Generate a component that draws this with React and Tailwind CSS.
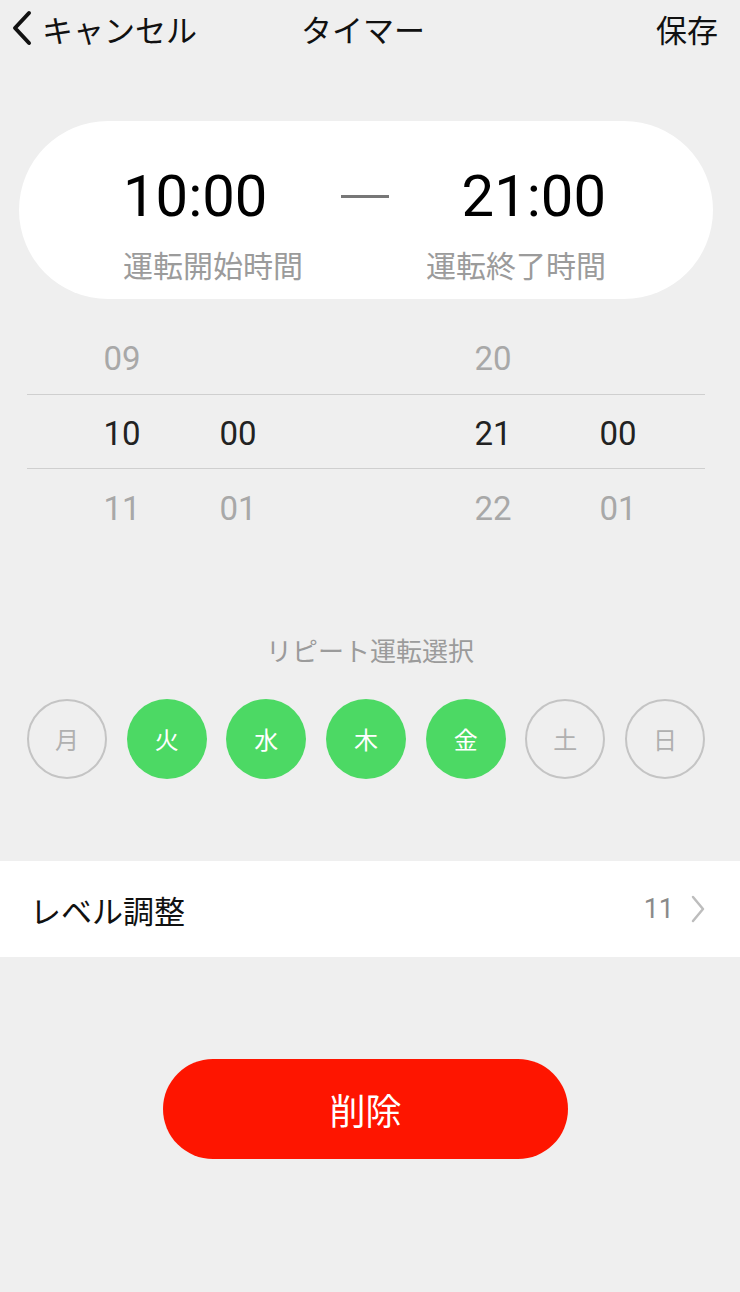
import React from 'react';

const days = [
  { label: '月', on: false },
  { label: '火', on: true },
  { label: '水', on: true },
  { label: '木', on: true },
  { label: '金', on: true },
  { label: '土', on: false },
  { label: '日', on: false },
];

const rows = [
  { cells: ['09', '', '20', ''], active: false },
  { cells: ['10', '00', '21', '00'], active: true },
  { cells: ['11', '01', '22', '01'], active: false },
];

const digits = { fontFamily: 'Roboto, "Noto Sans", sans-serif' };

const PickerRow = ({ cells, active }) => {
  const color = active ? 'text-[#222]' : 'text-[#a8a8a8]';
  return (
    <div
      className={`flex h-[75px] items-center pt-[3px] text-[33px] leading-none ${color} ${
        active ? 'border-y border-[#cfcfcf]' : ''
      }`}
      style={digits}
    >
      <div className="ml-[55px] w-[80px] text-center">{cells[0]}</div>
      <div className="ml-[36px] w-[80px] text-center">{cells[1]}</div>
      <div className="ml-[175px] w-[80px] text-center">{cells[2]}</div>
      <div className="ml-[45px] w-[80px] text-center">{cells[3]}</div>
    </div>
  );
};

export default function App() {
  return (
    <div
      className="min-h-[1292px] w-[740px] bg-[#efefef] pb-10"
      style={{ fontFamily: '"Noto Sans CJK JP", "Noto Sans", sans-serif' }}
    >
      {/* Header */}
      <div className="flex h-[56px] items-center justify-between pl-[10px] pr-[22px] text-[31px] leading-none text-[#111]">
        <div className="flex w-[200px] items-center">
          <svg width="24" height="38" viewBox="0 0 24 38" className="mr-[8px]">
            <polyline
              points="19,4 5,19 19,34"
              fill="none"
              stroke="#111"
              strokeWidth="4"
              strokeLinecap="round"
              strokeLinejoin="round"
            />
          </svg>
          <span>キャンセル</span>
        </div>
        <div className="ml-[-2px]">タイマー</div>
        <div className="w-[200px] text-right">保存</div>
      </div>

      {/* Time card */}
      <div className="ml-[19px] mr-[27px] mt-[65px] flex h-[178px] justify-between rounded-full bg-white pl-[104px] pr-[107px] pt-[43px]">
        <div className="flex flex-col items-start">
          <div className="h-[64px] text-[58px] leading-[64px] text-black" style={digits}>10:00</div>
          <div className="mt-[16px] h-[40px] text-[30px] leading-[40px] text-[#9b9b9b]">運転開始時間</div>
        </div>
        <div className="mt-[31px] h-[3px] w-[48px] bg-[#777]" />
        <div className="flex flex-col items-end">
          <div className="h-[64px] text-[58px] leading-[64px] text-black" style={digits}>21:00</div>
          <div className="mt-[16px] h-[40px] text-[30px] leading-[40px] text-[#9b9b9b]">運転終了時間</div>
        </div>
      </div>

      {/* Picker */}
      <div className="ml-[27px] mr-[35px] mt-[20px]">
        {rows.map((r, i) => (
          <PickerRow key={i} cells={r.cells} active={r.active} />
        ))}
      </div>

      {/* Repeat */}
      <div className="mt-[88px] h-[36px] text-center text-[26px] leading-[36px] text-[#9b9b9b]">
        リピート運転選択
      </div>
      <div className="ml-[27px] mr-[35px] mt-[31px] flex justify-between">
        {days.map((d) => (
          <div
            key={d.label}
            className={`flex h-[80px] w-[80px] items-center justify-center rounded-full text-[24px] leading-none ${
              d.on
                ? 'bg-[#4cd964] text-white'
                : 'border-2 border-[#c4c4c4] text-[#b0b0b0]'
            }`}
          >
            {d.label}
          </div>
        ))}
      </div>

      {/* Level */}
      <div className="mt-[82px] flex h-[96px] items-center justify-between bg-white pl-[30px] pr-[34px]">
        <div className="text-[31px] leading-none text-[#111]">レベル調整</div>
        <div className="flex items-center gap-[16px]">
          <span className="text-[27px] leading-none text-[#8a8a8a]" style={digits}>11</span>
          <svg width="16" height="30" viewBox="0 0 16 30">
            <polyline
              points="3,3 13,15 3,27"
              fill="none"
              stroke="#bdbdbd"
              strokeWidth="2.5"
              strokeLinecap="round"
              strokeLinejoin="round"
            />
          </svg>
        </div>
      </div>

      {/* Delete */}
      <button className="ml-[163px] mt-[102px] flex h-[100px] w-[405px] items-center justify-center rounded-full bg-[#fe1500] text-[36px] leading-none text-white">
        削除
      </button>
    </div>
  );
}
